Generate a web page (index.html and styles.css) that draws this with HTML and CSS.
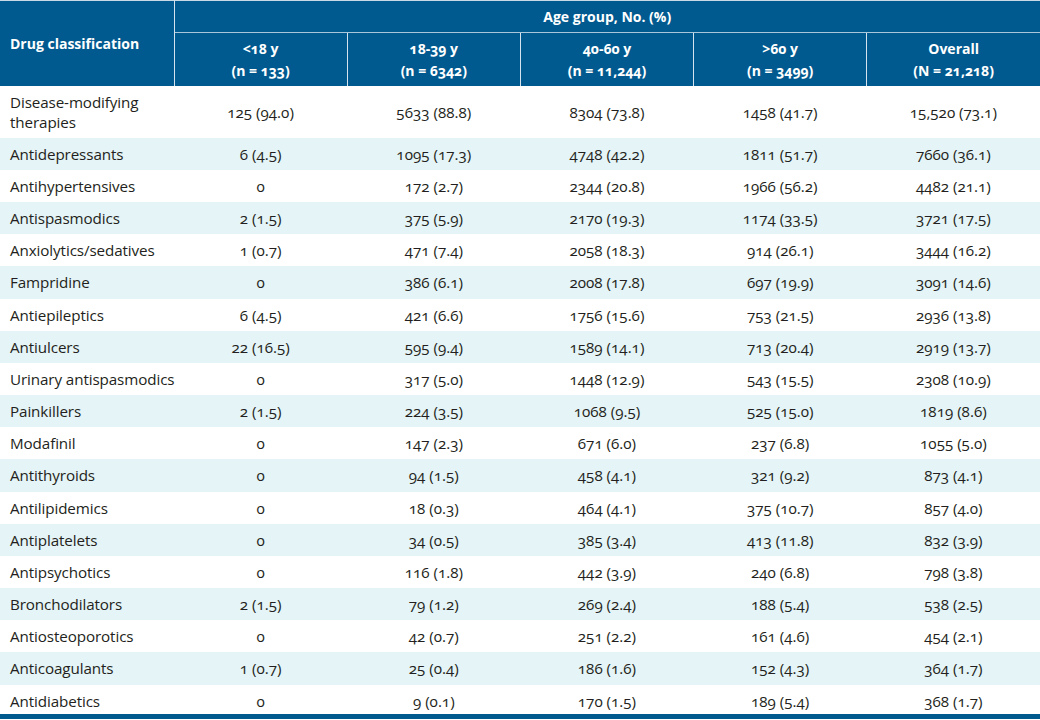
FILE: index.html
```html
<!DOCTYPE html>
<html lang="en">
<head>
<meta charset="utf-8">
<title>Drug classification by age group</title>
<link rel="stylesheet" href="styles.css">
</head>
<body>
<div class="table-wrap">
<table class="data-table">
  <colgroup>
    <col class="col-name">
    <col class="col-num"><col class="col-num"><col class="col-num"><col class="col-num"><col class="col-num">
  </colgroup>
  <thead>
    <tr class="head-top">
      <th rowspan="2" class="th-name">Drug classification</th>
      <th colspan="5" class="th-group">Age group, No. (%)</th>
    </tr>
    <tr class="head-sub">
      <th class="th-sub">&lt;18 y<br>(n = 133)</th>
      <th class="th-sub">18-39 y<br>(n = 6342)</th>
      <th class="th-sub">40-60 y<br>(n = 11,244)</th>
      <th class="th-sub">&gt;60 y<br>(n = 3499)</th>
      <th class="th-sub">Overall<br>(N = 21,218)</th>
    </tr>
  </thead>
  <tbody>
    <tr class="row-tall"><td class="name">Disease-modifying<br>therapies</td><td>125 (94.0)</td><td>5633 (88.8)</td><td>8304 (73.8)</td><td>1458 (41.7)</td><td>15,520 (73.1)</td></tr>
    <tr><td class="name">Antidepressants</td><td>6 (4.5)</td><td>1095 (17.3)</td><td>4748 (42.2)</td><td>1811 (51.7)</td><td>7660 (36.1)</td></tr>
    <tr><td class="name">Antihypertensives</td><td>0</td><td>172 (2.7)</td><td>2344 (20.8)</td><td>1966 (56.2)</td><td>4482 (21.1)</td></tr>
    <tr><td class="name">Antispasmodics</td><td>2 (1.5)</td><td>375 (5.9)</td><td>2170 (19.3)</td><td>1174 (33.5)</td><td>3721 (17.5)</td></tr>
    <tr><td class="name">Anxiolytics/sedatives</td><td>1 (0.7)</td><td>471 (7.4)</td><td>2058 (18.3)</td><td>914 (26.1)</td><td>3444 (16.2)</td></tr>
    <tr><td class="name">Fampridine</td><td>0</td><td>386 (6.1)</td><td>2008 (17.8)</td><td>697 (19.9)</td><td>3091 (14.6)</td></tr>
    <tr><td class="name">Antiepileptics</td><td>6 (4.5)</td><td>421 (6.6)</td><td>1756 (15.6)</td><td>753 (21.5)</td><td>2936 (13.8)</td></tr>
    <tr><td class="name">Antiulcers</td><td>22 (16.5)</td><td>595 (9.4)</td><td>1589 (14.1)</td><td>713 (20.4)</td><td>2919 (13.7)</td></tr>
    <tr><td class="name">Urinary antispasmodics</td><td>0</td><td>317 (5.0)</td><td>1448 (12.9)</td><td>543 (15.5)</td><td>2308 (10.9)</td></tr>
    <tr><td class="name">Painkillers</td><td>2 (1.5)</td><td>224 (3.5)</td><td>1068 (9.5)</td><td>525 (15.0)</td><td>1819 (8.6)</td></tr>
    <tr><td class="name">Modafinil</td><td>0</td><td>147 (2.3)</td><td>671 (6.0)</td><td>237 (6.8)</td><td>1055 (5.0)</td></tr>
    <tr><td class="name">Antithyroids</td><td>0</td><td>94 (1.5)</td><td>458 (4.1)</td><td>321 (9.2)</td><td>873 (4.1)</td></tr>
    <tr><td class="name">Antilipidemics</td><td>0</td><td>18 (0.3)</td><td>464 (4.1)</td><td>375 (10.7)</td><td>857 (4.0)</td></tr>
    <tr><td class="name">Antiplatelets</td><td>0</td><td>34 (0.5)</td><td>385 (3.4)</td><td>413 (11.8)</td><td>832 (3.9)</td></tr>
    <tr><td class="name">Antipsychotics</td><td>0</td><td>116 (1.8)</td><td>442 (3.9)</td><td>240 (6.8)</td><td>798 (3.8)</td></tr>
    <tr><td class="name">Bronchodilators</td><td>2 (1.5)</td><td>79 (1.2)</td><td>269 (2.4)</td><td>188 (5.4)</td><td>538 (2.5)</td></tr>
    <tr><td class="name">Antiosteoporotics</td><td>0</td><td>42 (0.7)</td><td>251 (2.2)</td><td>161 (4.6)</td><td>454 (2.1)</td></tr>
    <tr><td class="name">Anticoagulants</td><td>1 (0.7)</td><td>25 (0.4)</td><td>186 (1.6)</td><td>152 (4.3)</td><td>364 (1.7)</td></tr>
    <tr class="row-last"><td class="name">Antidiabetics</td><td>0</td><td>9 (0.1)</td><td>170 (1.5)</td><td>189 (5.4)</td><td>368 (1.7)</td></tr>
  </tbody>
</table>
</div>
</body>
</html>
```

FILE: styles.css
```css
html, body {
  margin: 0;
  padding: 0;
  background: #ffffff;
}

.table-wrap {
  width: 1040px;
  border-bottom: 5px solid #005a8e;
}

.data-table {
  width: 1040px;
  table-layout: fixed;
  border-collapse: collapse;
  border-spacing: 0;
  font-family: "Open Sans", "Noto Sans", sans-serif;
  font-variant-numeric: oldstyle-nums;
  color: #231f20;
  border-top: 1px solid #c9d9e6;
}

.col-name { width: 174px; }

thead th {
  background: #015a8f;
  color: #ffffff;
  font-weight: 700;
  font-size: 14px;
  padding: 0;
}

.head-top { height: 32px; }
.head-sub { height: 53px; }

.th-name {
  text-align: left;
  padding-left: 10px;
  border-right: 1px solid #d5e3ee;
}

.th-group {
  text-align: center;
  border-bottom: 1px solid #a9c6da;
}

.th-sub {
  text-align: center;
  line-height: 22px;
  padding-top: 1px;
  border-left: 1px solid #d5e3ee;
}

tbody tr { height: 32px; }
tbody tr:nth-child(6n) { height: 33px; }
tbody tr:nth-child(even) { background: #e5f4f6; }
tbody tr.row-tall { height: 52px; }
tbody tr.row-last { height: 29px; }

tbody td {
  font-size: 15.2px;
  line-height: 20px;
  text-align: center;
  vertical-align: middle;
  padding: 0;
  white-space: nowrap;
}

tbody tr.row-last td { padding-top: 4px; }

tbody td.name {
  text-align: left;
  padding-left: 10px;
  letter-spacing: -0.1px;
}
```
